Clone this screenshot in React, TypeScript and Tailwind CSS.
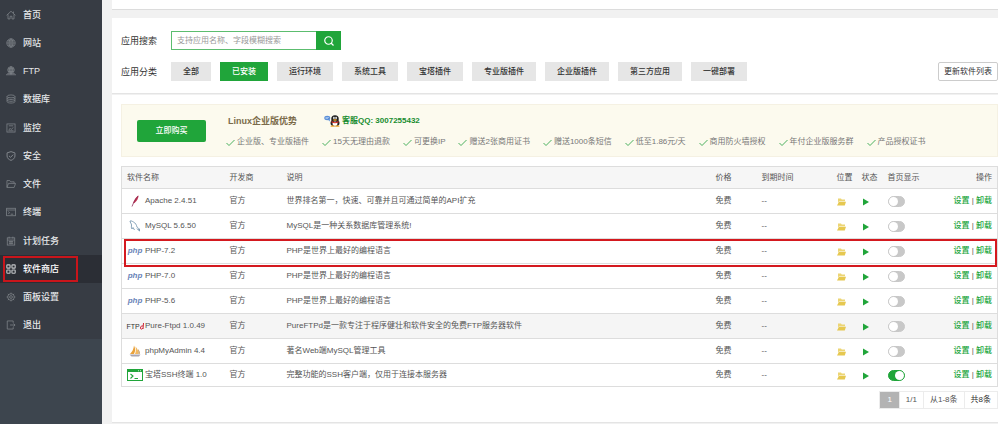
import { useState } from "react";
import type { ReactNode } from "react";

interface MenuItem {
  name: string;
  icon: ReactNode;
}

const menuGroups: MenuItem[][] = [
  [
    {
      name: "首页",
      icon: <path d="M1 8.5 8 2l7 6.5M3.2 7v7.3h3.3V10h3v4.3h3.3V7M12 5V2.5" />,
    },
    {
      name: "网站",
      icon: (
        <>
          <circle cx="8" cy="8" r="6.7" />
          <path d="M1.3 8h13.4M8 1.3v13.4M2.5 4.7h11M2.5 11.3h11" />
          <ellipse cx="8" cy="8" rx="3.2" ry="6.7" />
        </>
      ),
    },
    {
      name: "FTP",
      icon: (
        <>
          <circle cx="8" cy="6.3" r="5.2" />
          <ellipse cx="8" cy="6.3" rx="2.3" ry="5.2" />
          <path d="M2.8 6.3h10.4M3.6 3.8h8.8M3.6 8.8h8.8M8 1v13M0 14h16M2 12.2h12" />
        </>
      ),
    },
    {
      name: "数据库",
      icon: (
        <>
          <ellipse cx="8" cy="3.8" rx="6.3" ry="2.3" />
          <path d="M1.7 3.8v8.4c0 1.3 2.8 2.3 6.3 2.3s6.3-1 6.3-2.3V3.8M1.7 6.6c0 1.3 2.8 2.3 6.3 2.3s6.3-1 6.3-2.3M1.7 9.4c0 1.3 2.8 2.3 6.3 2.3s6.3-1 6.3-2.3" />
        </>
      ),
    },
  ],
  [
    {
      name: "监控",
      icon: (
        <>
          <rect x="1.5" y="1.5" width="13" height="13" />
          <path d="M4.5 4.5h7M4.5 11.5l2-3 2 2 3-3.5M4 12.5h8" />
        </>
      ),
    },
    {
      name: "安全",
      icon: (
        <path
          d="M8 1 14.3 3v5c0 3.5-2.8 5.7-6.3 7-3.5-1.3-6.3-3.5-6.3-7V3zM4.8 7.8l2.5 2.4 4.2-4.4"
          strokeWidth="1.6"
        />
      ),
    },
    {
      name: "文件",
      icon: <path d="M1.5 13.5v-11H6l1.5 2H13V7M1.5 13.5 4 7h11.300L13 13.5z" />,
    },
    {
      name: "终端",
      icon: (
        <>
          <rect x="1" y="2" width="14" height="12" />
          <path d="M1 4.8h14M3.5 7.3l2.3 1.8-2.3 1.8M7.5 11.500h4" />
        </>
      ),
    },
  ],
  [
    {
      name: "计划任务",
      icon: (
        <>
          <rect x="2" y="3" width="12" height="11.5" />
          <path d="M5 1v3M11 1v3M2 6.5h12M4.5 9h7M4.5 11.7h7M6.5 7.5v6M9.5 7.5v6" />
        </>
      ),
    },
    {
      name: "软件商店",
      icon: (
        <g strokeWidth="1.8">
          <rect x="1.3" y="1.3" width="5.2" height="5.2" rx="1" />
          <rect x="9.5" y="1.3" width="5.2" height="5.2" rx="1" />
          <rect x="1.3" y="9.5" width="5.2" height="5.2" rx="1" />
          <rect x="9.5" y="9.5" width="5.2" height="5.2" rx="1" />
        </g>
      ),
    },
    {
      name: "面板设置",
      icon: (
        <>
          <circle cx="8" cy="8" r="5.3" />
          <circle cx="8" cy="8" r="2.2" />
          <path d="M8 1v2M8 13v2M1 8h2M13 8h2M3 3l1.5 1.5M11.5 11.5 13 13M3 13l1.5-1.5M11.5 4.5 13 3" />
        </>
      ),
    },
    {
      name: "退出",
      icon: <path d="M11.5 4.5v-3H2v13h9.5v-3M6.5 8h8M12 5.5 14.5 8 12 10.5" />,
    },
  ],
];

const categories = [
  "全部",
  "已安装",
  "运行环境",
  "系统工具",
  "宝塔插件",
  "专业版插件",
  "企业版插件",
  "第三方应用",
  "一键部署",
];

const features = [
  "企业版、专业版插件",
  "15天无理由退款",
  "可更换IP",
  "赠送2张商用证书",
  "赠送1000条短信",
  "低至1.86元/天",
  "商用防火墙授权",
  "年付企业版服务群",
  "产品授权证书",
];

const apps = [
  {
    name: "Apache 2.4.51",
    icon: "apache",
    desc: "世界排名第一，快速、可靠并且可通过简单的API扩充",
  },
  { name: "MySQL 5.6.50", icon: "mysql", desc: "MySQL是一种关系数据库管理系统!" },
  { name: "PHP-7.2", icon: "php", desc: "PHP是世界上最好的编程语言", marked: true },
  { name: "PHP-7.0", icon: "php", desc: "PHP是世界上最好的编程语言" },
  { name: "PHP-5.6", icon: "php", desc: "PHP是世界上最好的编程语言" },
  {
    name: "Pure-Ftpd 1.0.49",
    icon: "ftp",
    desc: "PureFTPd是一款专注于程序健壮和软件安全的免费FTP服务器软件",
    hover: true,
  },
  { name: "phpMyAdmin 4.4", icon: "pma", desc: "著名Web端MySQL管理工具" },
  {
    name: "宝塔SSH终端 1.0",
    icon: "ssh",
    desc: "完整功能的SSH客户端，仅用于连接本服务器",
    shown: true,
  },
];

function AppIcon({ type }: { type: string }) {
  if (type === "apache") {
    return (
      <svg className="w-3 h-3" viewBox="0 0 24 24" fill="none">
        <path d="M19 1c-3 1-9 8-11 16l3-1c5-4 8-10 8-15z" fill="#c02f4c" />
        <path d="M18 2C13 8 9 15 6 23" stroke="#8c3560" strokeWidth="1.6" />
      </svg>
    );
  }

  if (type === "mysql") {
    return (
      <svg className="w-3 h-3" viewBox="0 0 24 24" fill="none" stroke="#7394ad" strokeWidth="1.7">
        <path d="M2 2c3-1 5 1 7 2 4 2 6 6 7 10 1 2 4 3 6 5h-3l3 3c-3-1-5-3-6-5M2 2c0 3 3 5 3 8s-1 6 1 8l2-3 3 5" />
      </svg>
    );
  }

  if (type === "php") {
    return (
      <span className="text-[8px] leading-none italic font-bold text-[#6a83b8]">
        php
      </span>
    );
  }

  if (type === "ftp") {
    return (
      <>
        <span className="text-[7px] leading-none text-[#333]">FTP</span>
        <svg className="w-1 h-2 shrink-0" viewBox="0 0 8 16" fill="none">
          <path d="M7 2 6 14M6 8C3 7 1 9 1 12s3 3 5 0" stroke="#cf2436" strokeWidth="2" />
        </svg>
      </>
    );
  }

  if (type === "pma") {
    return (
      <svg className="w-3 h-3" viewBox="0 0 24 24">
        <path d="M10 1c3 6 3 11 0 17H2C7 13 9 8 10 1z" fill="#e9a13b" />
        <path d="M13 3c5 5 6 10 5 15h-6c2-5 2-10 1-15z" fill="#f2b861" />
        <path d="M18 8c3 3 4 7 3 10h-2c0-4 0-7-1-10z" fill="#b98036" />
        <path d="M1 19h22l-3 4H5z" fill="#a9a6b3" />
      </svg>
    );
  }

  return (
    <svg className="w-4 h-3 shrink-0" viewBox="0 0 32 24" fill="none">
      <rect x="1" y="1" width="30" height="22" fill="#fff" stroke="#20a53a" strokeWidth="2" />
      <path d="M1 1h30v5H1z" fill="#20a53a" />
      <path d="M22 3.5h2M26 3.5h2" stroke="#fff" strokeWidth="1.5" />
      <path d="m7 10 5 4-5 5M15 19h7" stroke="#20a53a" strokeWidth="2.2" />
    </svg>
  );
}

function QQIcon() {
  return (
    <svg className="w-4 h-3" viewBox="0 0 32 24">
      <ellipse cx="6.5" cy="6" rx="6" ry="4.5" fill="#5b8fd8" />
      <path d="m7 9 5 4-1-6z" fill="#5b8fd8" />
      <path d="M3 5h7M3 7h5" stroke="#dbe8fa" />
      <ellipse cx="22" cy="16" rx="9" ry="6.5" fill="#222" />
      <ellipse cx="22" cy="8" rx="7.500" ry="7.500" fill="#222" />
      <ellipse cx="22" cy="17.500" rx="5" ry="4.500" fill="#fff" />
      <ellipse cx="19.800" cy="6" rx="1.600" ry="2.300" fill="#fff" />
      <ellipse cx="24.200" cy="6" rx="1.600" ry="2.300" fill="#fff" />
      <ellipse cx="22" cy="10" rx="4" ry="1.300" fill="#f5a623" />
      <path d="M15 12c4 3 10 3 14 0v3c-4 2-10 2-14 0z" fill="#d9342b" />
      <path d="M14 21h7v2.500h-8zM23 21h7l1 2.500h-8z" fill="#f5a623" />
    </svg>
  );
}

export default function SoftwareStore() {
  const [category, setCategory] = useState("已安装");

  return (
    <div className="flex min-h-screen bg-[#f1f1f1] text-[8px] leading-3 text-[#555] font-['Liberation_Sans','Noto_Sans_CJK_SC',sans-serif]">
      <nav className="w-[102px] shrink-0 bg-[#3d454e]">
        <div className="flex flex-col gap-px pt-px bg-[#373c44]">
          {menuGroups.map((group, index) => (
            <ul key={index}>
              {group.map((item) => {
                const active = item.name === "软件商店";

                return (
                  <li
                    key={item.name}
                    className={active ? "relative bg-[#2b2e35]" : "relative"}
                  >
                    <a
                      href="#"
                      className={
                        active
                          ? "flex items-center h-7 gap-[7px] pl-[6px] text-[9px] font-medium text-white"
                          : "flex items-center h-7 gap-[7px] pl-[6px] text-[9px] font-medium text-[#e6e8ea]"
                      }
                    >
                      <svg
                        className={
                          active
                            ? "w-[10px] h-[10px] text-[#c3c5c8]"
                            : "w-[10px] h-[10px] text-[#80858b]"
                        }
                        viewBox="0 0 16 16"
                        fill="none"
                        stroke="currentColor"
                        strokeWidth="1.2"
                      >
                        {item.icon}
                      </svg>
                      {item.name}
                    </a>

                    {active && (
                      <span className="absolute inset-y-px left-[3px] right-6 border-2 border-[#c9151b] pointer-events-none"></span>
                    )}
                  </li>
                );
              })}
            </ul>
          ))}
        </div>
      </nav>

      <main className="flex flex-col flex-1 min-w-0 pl-[10px]">
        <div className="h-[10px] bg-white border-b border-[#dcdcdc]"></div>

        <section className="mt-2 bg-white border-b border-[#e4e4e4] pt-[13px] pb-3 pl-[9px]">
          <div className="flex items-center">
            <label className="w-[50px] text-[9px] text-[#333]" htmlFor="search">
              应用搜索
            </label>
            <input
              className="w-[145px] h-[19px] px-[5px] border border-r-0 border-[#5cbd6f] placeholder-[#999] outline-none"
              id="search"
              type="text"
              placeholder="支持应用名称、字段模糊搜索"
            />
            <button
              className="flex items-center justify-center w-[25px] h-[19px] bg-[#20a53a]"
              type="button"
              aria-label="搜索"
            >
              <svg
                className="w-[10px] h-[10px]"
                viewBox="0 0 20 20"
                fill="none"
                stroke="#fff"
                strokeWidth="2.4"
              >
                <circle cx="9" cy="9" r="7.5" />
                <path d="m14 14 5 5" />
              </svg>
            </button>
          </div>

          <div className="flex items-center mt-3">
            <span className="w-[50px] text-[9px] text-[#333]">应用分类</span>
            <div className="flex gap-[9px]">
              {categories.map((name) => (
                <button
                  key={name}
                  type="button"
                  onClick={() => setCategory(name)}
                  className={
                    name === category
                      ? "h-[19px] px-3 font-medium bg-[#20a53a] text-white"
                      : "h-[19px] px-3 font-medium bg-[#e6e6e6] text-[#333]"
                  }
                >
                  {name}
                </button>
              ))}
            </div>
            <button
              className="h-[19px] px-[5px] ml-auto border border-[#ccc] rounded-xs text-[#333]"
              type="button"
            >
              更新软件列表
            </button>
          </div>
        </section>

        <section className="flex-1 mt-px mb-px bg-white border-b border-[#e4e4e4] pt-[9px] pl-[9px]">
          <div className="flex items-center h-[53px] bg-[#fcfaee] border border-[#f5f1e3] pl-[15px]">
            <button
              className="w-[69px] h-[22px] shrink-0 rounded-xs bg-[#20a53a] font-medium text-white"
              type="button"
            >
              立即购买
            </button>

            <div className="pt-[2px] ml-5">
              <div className="flex items-center h-5">
                <h2 className="w-[98px] pl-[2px] text-[9px] font-bold text-[#7b6b4a]">
                  Linux企业版优势
                </h2>
                <QQIcon />
                <a className="ml-[2px] font-bold text-[#178c2f]" href="#">
                  客服QQ: 3007255432
                </a>
              </div>
              <ul className="flex gap-[13px] h-5 mt-px items-center whitespace-nowrap text-[#777]">
                {features.map((feature) => (
                  <li key={feature} className="flex items-center gap-[2px]">
                    <svg
                      className="w-[9px] h-[9px]"
                      viewBox="0 0 18 18"
                      fill="none"
                      stroke="#36a84c"
                      strokeWidth="1.8"
                    >
                      <path d="m1 10 5 5L17 4" />
                    </svg>
                    {feature}
                  </li>
                ))}
              </ul>
            </div>
          </div>

          <table className="w-full mt-[9px] table-fixed border-collapse border border-[#ddd] text-left whitespace-nowrap">
            <thead>
              <tr className="h-[22px] bg-[#f6f6f6] border-b border-[#ddd]">
                <th className="w-[103px] pl-[5px] font-normal">软件名称</th>
                <th className="w-[57px] pl-[5px] font-normal">开发商</th>
                <th className="pl-[5px] font-normal">说明</th>
                <th className="w-[46px] pl-[6px] font-normal">价格</th>
                <th className="w-[75px] pl-[6px] font-normal">到期时间</th>
                <th className="w-[25px] pl-[6px] font-normal">位置</th>
                <th className="w-[26px] pl-[6px] font-normal">状态</th>
                <th className="w-[56px] pl-[6px] font-normal">首页显示</th>
                <th className="w-[60px] pr-[5px] font-normal text-right">操作</th>
              </tr>
            </thead>
            <tbody>
              {apps.map((app) => (
                <tr
                  key={app.name}
                  className={
                    app.hover
                      ? "relative h-[25px] last:h-[23px] border-b border-[#ddd] bg-[#f5f5f5]"
                      : "relative h-[25px] last:h-[23px] border-b border-[#ddd]"
                  }
                >
                  <td className="pl-[5px]">
                    <div className="flex items-center gap-[2px]">
                      <span className="flex items-center justify-center w-4 h-3 shrink-0">
                        <AppIcon type={app.icon} />
                      </span>
                      {app.name}
                    </div>
                    {app.marked && (
                      <span className="absolute top-0 left-[2px] right-px -bottom-1 border-2 border-[#d4191f] pointer-events-none"></span>
                    )}
                  </td>
                  <td className="pl-[5px]">官方</td>
                  <td className="pl-[5px]">{app.desc}</td>
                  <td className="pl-[6px]">免费</td>
                  <td className="pl-[6px]">--</td>
                  <td className="pl-[6px]">
                    <button className="block pt-px" type="button" aria-label="打开目录">
                      <svg className="w-[9px] h-2" viewBox="0 0 18 16">
                        <path d="M2 7V1h6l1.5 2H16v3.5H4L2 10z" fill="#ecd574" />
                        <path d="M4 7.5h14L15.5 15H0z" fill="#e6c850" />
                      </svg>
                    </button>
                  </td>
                  <td className="pl-[7px]">
                    <button className="block pt-px" type="button" aria-label="运行中">
                      <svg className="w-[6px] h-2" viewBox="0 0 12 16">
                        <path d="M0 1 12 8 0 15z" fill="#20a53a" />
                      </svg>
                    </button>
                  </td>
                  <td className="pl-[6px]">
                    <input
                      type="checkbox"
                      aria-label={app.name}
                      defaultChecked={app.shown}
                      className="block appearance-none w-[17px] h-[11px] rounded-full border border-[#c8c8c8] bg-[#c8c8c8] checked:border-[#20a53a] checked:bg-[#20a53a] before:block before:w-[9px] before:h-[9px] before:rounded-full before:bg-white checked:before:ml-[6px]"
                    />
                  </td>
                  <td className="pr-[5px] text-right">
                    <a className="font-medium text-[#20a53a]" href="#">
                      设置
                    </a>
                    {" | "}
                    <a className="font-medium text-[#20a53a]" href="#">
                      卸载
                    </a>
                  </td>
                </tr>
              ))}
            </tbody>
          </table>

          <div className="flex justify-end mt-1 mb-[13px]">
            <div className="flex h-[18px] items-stretch border border-[#ececec] divide-x divide-[#ececec] leading-4">
              <span className="px-[7px] bg-[#b3b3b3] text-white">1</span>
              <span className="px-[6px]">1/1</span>
              <span className="px-[6px]">从1-8条</span>
              <span className="px-[6px] text-[#333]">共8条</span>
            </div>
          </div>
        </section>
      </main>
    </div>
  );
}
